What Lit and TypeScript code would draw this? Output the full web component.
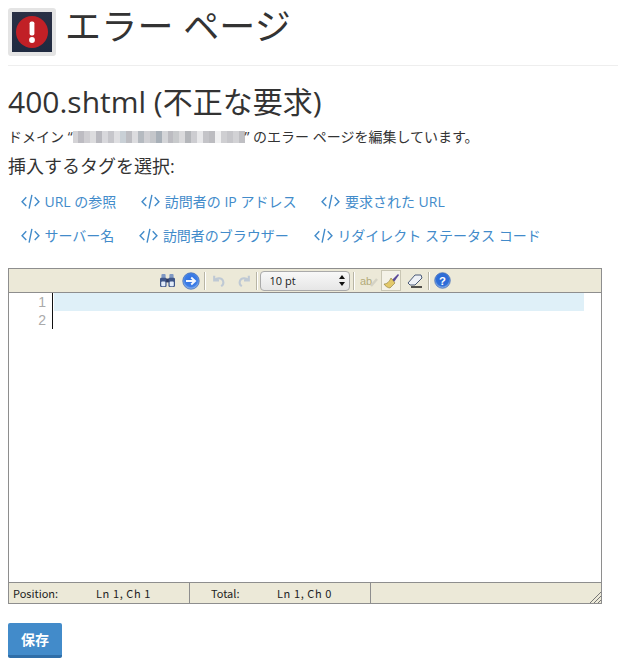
import { LitElement, html, css } from "lit";
import { customElement } from "lit/decorators.js";

const codeIcon = html`<svg class="code" viewBox="0 0 20 16" width="19" height="15" fill="none" stroke="currentColor" stroke-width="1.5"><path d="M5.5 3.5 1 8.2l4.5 4.7M14.5 3.5 19 8.2l-4.5 4.7M11.5 1 8.5 15.5"/></svg>`;

const rows = [
  ["URL の参照", "訪問者の IP アドレス", "要求された URL"],
  ["サーバー名", "訪問者のブラウザー", "リダイレクト ステータス コード"],
];

const blur = ["#d4d3d6","#bdbcc2","#cfced2","#dcdcde","#b9b9bf","#d8d8dc","#c6c6cb","#dfdfe2","#c9d0d6","#bdbdc2","#dcdcdf","#b5bac0","#d0d0d4","#c4c6ca","#a8b0b8","#d4d5d8","#bcbcc1","#c8cacc","#dadadc","#b4b6ba","#cdcdd1","#e8e8ea","#c4c4c8","#bcbcc0","#f0f0f1","#cfcfd2","#c6c6ca","#d2d2d5","#bfbfc3"];

@customElement("app-root")
export class AppRoot extends LitElement {
  static styles = css`
    :host { display: block; width: 618px; height: 669px; overflow: hidden; background: #fff; color: #333;
      font-family: "Open Sans", "Noto Sans CJK JP", sans-serif; font-size: 13px; }
    .page { padding: 8px 0 0 8px; width: 594px; }
    .head { display: flex; align-items: center; gap: 9px; height: 48px; padding-bottom: 9px; border-bottom: 1px solid #eee; width: 610px; }
    .logo { width: 48px; height: 48px; box-sizing: border-box; border: 4px solid #e4e4e4; border-radius: 3px; background: linear-gradient(#2a3045, #1f2a40); display: flex; align-items: center; justify-content: center; }
    h1 { margin: 0 0 10px; font-size: 36px; font-weight: 400; line-height: 40px; letter-spacing: 0.2px; }
    h2 { margin: 16px 0 0; font-size: 30px; font-weight: 400; line-height: 40px; }
    .domain { margin: 6px 0 0; font-size: 14px; line-height: 18px; display: flex; align-items: center; white-space: pre; }
    .mosaic { display: flex; width: 172px; height: 12px; }
    .mosaic span { flex: 1; }
    h3 { margin: 8px 0 0; font-size: 18px; font-weight: 400; line-height: 24px; }
    .links { margin-top: 6px; padding-left: 13px; }
    .row { display: flex; gap: 25px; height: 34px; align-items: center; color: #428bca; font-size: 14px; }
    .link { display: flex; align-items: center; gap: 4.5px; white-space: nowrap; }
    .code { flex: none; }
    .editor { margin-top: 16px; border: 1px solid #8e8e8e; width: 592px; height: 334px; display: flex; flex-direction: column; background: #fff; }
    .bar { height: 23px; background: #ece9d8; border-bottom: 1px solid #8e8e8e; display: flex; align-items: center; justify-content: center; }
    .ic { display: flex; flex: none; width: 18px; height: 18px; align-items: center; justify-content: center; }
    .sep { flex: none; width: 1px; height: 18px; background: #b8b5a5; border-right: 1px solid #fff; }
    .active { box-sizing: border-box; width: 20px; height: 21px; background: #f4f2e8; border: 1px solid #c9c6b4; }
    .m2 { margin-left: 2px; } .m3 { margin-left: 3px; } .m4 { margin-left: 4px; } .m5 { margin-left: 5px; } .m7 { margin-left: 7px; }
    .sel { flex: none; box-sizing: border-box; width: 90px; height: 20px; border: 1px solid #aaa; border-radius: 4px; background: linear-gradient(#f8f8f8, #e6e6e6); display: flex; align-items: center; justify-content: space-between; padding: 0 4px 0 9px; font: 11px "Open Sans", sans-serif; color: #222; }
    .body { flex: 1; display: flex; min-height: 0; }
    .gutter { width: 37px; color: #aaa; font: 14px/18px "Liberation Sans", sans-serif; text-align: right; height: 36px; border-right: 1px solid #111; padding-right: 6px; }
    .lines { flex: 1; padding-left: 1px; padding-right: 17px; }
    .hl { height: 18px; background: #dff0f8; }
    .status { height: 20px; background: #ece9d8; border-top: 1px solid #8e8e8e; display: flex; font: 11px/20px "Noto Sans CJK JP", "Open Sans", sans-serif; color: #222; position: relative; }
    .cell { border-right: 1px solid #8e8e8e; display: flex; box-sizing: border-box; }
    .c1 { width: 181px; padding-left: 4px; }
    .c2 { width: 181px; padding-left: 21px; }
    .label { width: 83px; } .c2 .label { width: 66px; }
    .val { letter-spacing: 0.6px; }
    .grip { position: absolute; right: 0; bottom: 0; }
    .save { display: block; margin-top: 19px; width: 54px; height: 35px; border: 0; border-bottom: 3px solid #2f6ea8; border-radius: 2px; background: #428bca; color: #fff; font: 700 14px "Noto Sans CJK JP", sans-serif; padding: 0; box-sizing: border-box; }
  `;

  render() {
    return html`<div class="page">
      <div class="head">
        <div class="logo"><svg viewBox="0 0 32 32" width="32" height="32"><circle cx="16" cy="16" r="16" fill="#c12026"/><rect x="13.6" y="5.5" width="4.8" height="14" rx="1.8" fill="#fff"/><circle cx="16" cy="24" r="2.9" fill="#fff"/></svg></div>
        <h1>エラー ページ</h1>
      </div>
      <h2>400.shtml (不正な要求)</h2>
      <p class="domain">ドメイン “<span class="mosaic">${blur.map((c) => html`<span style="background:${c}"></span>`)}</span>” のエラー ページを編集しています。</p>
      <h3>挿入するタグを選択:</h3>
      <div class="links">
        ${rows.map((r) => html`<div class="row">${r.map((t) => html`<span class="link">${codeIcon}${t}</span>`)}</div>`)}
      </div>
      <div class="editor">
        <div class="bar">
          <span class="ic"><svg viewBox="0 0 18 16" width="17" height="15"><rect x="2.5" y="1" width="4.5" height="5" rx="1" fill="#7f98c4"/><rect x="11" y="1" width="4.5" height="5" rx="1" fill="#7f98c4"/><rect x="1" y="5" width="7" height="10" rx="1.5" fill="#3f5688"/><rect x="10" y="5" width="7" height="10" rx="1.5" fill="#3f5688"/><rect x="7.5" y="6" width="3" height="4" fill="#2a3a66"/><rect x="2.3" y="9" width="4.4" height="5" rx="1" fill="#e2ecfa"/><rect x="11.300" y="9" width="4.4" height="5" rx="1" fill="#e2ecfa"/></svg></span>
          <span class="ic m5"><svg viewBox="0 0 18 18" width="18" height="18"><defs><radialGradient id="ga" cx=".5" cy=".45" r=".55"><stop offset="0" stop-color="#2f6fe0"/><stop offset=".7" stop-color="#3c7de6"/><stop offset="1" stop-color="#a4c6f4"/></radialGradient></defs><circle cx="9" cy="9" r="8.2" fill="url(#ga)" stroke="#3a68b8" stroke-width=".8"/><path d="M4 9h8.5M9.2 5.5 13 9l-3.8 3.5" fill="none" stroke="#f4f8ff" stroke-width="2"/></svg></span>
          <span class="sep m4"></span>
          <span class="ic m4"><svg viewBox="0 0 16 16" width="14" height="14"><path d="M2.5 2v5.5H8M3 7c2.5-3 8-3 9.5.5 1 2.3 0 5-2 6.5" fill="none" stroke="#bfc9d4" stroke-width="2.4"/></svg></span>
          <span class="ic m7"><svg viewBox="0 0 16 16" width="14" height="14"><path d="M13.5 2v5.500H8M13 7c-2.500-3-8-3-9.500.5-1 2.300 0 5 2 6.500" fill="none" stroke="#bfc9d4" stroke-width="2.400"/></svg></span>
          <span class="sep m3"></span>
          <span class="sel m2">10 pt<svg viewBox="0 0 6 11" width="6" height="11" fill="#111"><path d="M3 0 6 4H0zM3 11 0 7h6z"/></svg></span>
          <span class="sep m3"></span>
          <span class="ic m5"><svg viewBox="0 0 18 16" width="18" height="16"><text x="0" y="12" font-family="Liberation Sans" font-size="11" fill="#b3ab7a">ab</text><path d="M11 13l6-7" stroke="#d4d2c4" stroke-width="2.500"/></svg></span>
          <span class="ic active m3"><svg viewBox="0 0 18 18" width="18" height="18"><path d="M10 8l6-6 1 1-5 7z" fill="#5a4a9a"/><path d="M9 6l4 5-5 5c-2 0-5-2-6-4 3 0 5-2 7-6z" fill="#e3c96a" stroke="#8a7a3a" stroke-width=".6"/></svg></span>
          <span class="ic m5"><svg viewBox="0 0 18 16" width="18" height="16"><path d="M2 10l7-8h6l1 3-7 7H4z" fill="#eef1f6" stroke="#4a5a78"/><path d="M5 14h11" stroke="#111" stroke-width="1.400"/></svg></span>
          <span class="sep m4"></span>
          <span class="ic m4"><svg viewBox="0 0 18 18" width="17" height="17"><defs><radialGradient id="gh" cx=".5" cy=".45" r=".55"><stop offset="0" stop-color="#2a66d4"/><stop offset=".72" stop-color="#2f6fd8"/><stop offset="1" stop-color="#b4d0f4"/></radialGradient></defs><circle cx="9" cy="9" r="8.200" fill="url(#gh)" stroke="#2f5db0" stroke-width=".8"/><text x="9" y="13.500" text-anchor="middle" font-family="Liberation Sans" font-weight="700" font-size="12" fill="#fff">?</text></svg></span>
        </div>
        <div class="body">
          <div class="gutter">1<br />2</div>
          <div class="lines"><div class="hl"></div></div>
        </div>
        <div class="status">
          <div class="cell c1"><span class="label">Position:</span><span class="val">Ln 1, Ch 1</span></div>
          <div class="cell c2"><span class="label">Total:</span><span class="val">Ln 1, Ch 0</span></div>
          <svg class="grip" viewBox="0 0 12 12" width="12" height="12" stroke="#777"><path d="M1 12 12 1M5 12l7-7M9 12l3-3"/></svg>
        </div>
      </div>
      <button class="save">保存</button>
    </div>`;
  }
}
